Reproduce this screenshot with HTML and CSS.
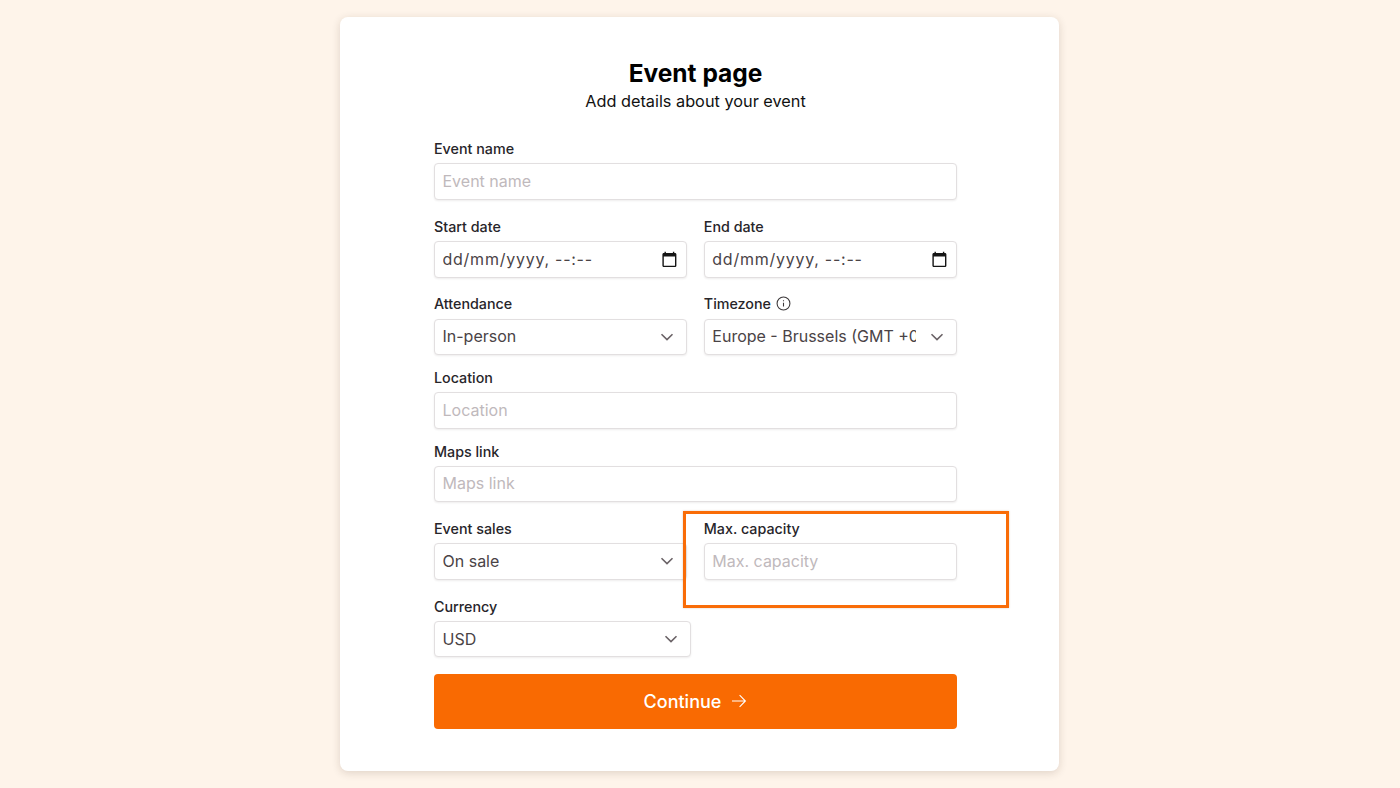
FILE: index.html
```html
<!DOCTYPE html>
<html lang="en">
<head>
<meta charset="utf-8">
<title>Event page</title>
<link rel="stylesheet" href="styles.css">
</head>
<body>
<main class="card">
  <header class="head">
    <h1>Event page</h1>
    <p>Add details about your event</p>
  </header>
  <form class="form">
    <div class="field">
      <label>Event name</label>
      <input class="control" placeholder="Event name">
    </div>
    <div class="row">
      <div class="field">
        <label>Start date</label>
        <div class="wrap">
          <input class="control date" value="dd/mm/yyyy, --:--">
          <svg class="cal" viewBox="0 0 24 24"><path d="M20 3h-1V1h-2v2H7V1H5v2H4c-1.1 0-2 .9-2 2v16c0 1.1.9 2 2 2h16c1.1 0 2-.9 2-2V5c0-1.1-.9-2-2-2zm0 18H4V8h16v13z"/></svg>
        </div>
      </div>
      <div class="field">
        <label>End date</label>
        <div class="wrap">
          <input class="control date" value="dd/mm/yyyy, --:--">
          <svg class="cal" viewBox="0 0 24 24"><path d="M20 3h-1V1h-2v2H7V1H5v2H4c-1.1 0-2 .9-2 2v16c0 1.1.9 2 2 2h16c1.1 0 2-.9 2-2V5c0-1.1-.9-2-2-2zm0 18H4V8h16v13z"/></svg>
        </div>
      </div>
    </div>
    <div class="row">
      <div class="field">
        <label>Attendance</label>
        <div class="wrap">
          <select class="control pick"><option>In-person</option></select>
          <svg class="chev" viewBox="0 0 14 8"><path d="M1.5 1.2 7 6.6l5.5-5.4"/></svg>
        </div>
      </div>
      <div class="field">
        <label class="with-info">Timezone
          <svg class="info" viewBox="0 0 14 14"><circle cx="7" cy="7" r="6"/><path d="M7 6.4v3.4M7 4v.9"/></svg>
        </label>
        <div class="wrap">
          <select class="control pick"><option>Europe - Brussels (GMT +01:00)</option></select>
          <svg class="chev" viewBox="0 0 14 8"><path d="M1.5 1.2 7 6.6l5.5-5.4"/></svg>
        </div>
      </div>
    </div>
    <div class="field tight">
      <label>Location</label>
      <input class="control" placeholder="Location">
    </div>
    <div class="field tight">
      <label>Maps link</label>
      <input class="control" placeholder="Maps link">
    </div>
    <div class="row">
      <div class="field">
        <label>Event sales</label>
        <div class="wrap">
          <select class="control pick"><option>On sale</option></select>
          <svg class="chev" viewBox="0 0 14 8"><path d="M1.5 1.2 7 6.6l5.5-5.4"/></svg>
        </div>
      </div>
      <div class="field highlighted">
        <label>Max. capacity</label>
        <input class="control" placeholder="Max. capacity">
        <span class="highlight"></span>
      </div>
    </div>
    <div class="field currency">
      <label>Currency</label>
      <div class="wrap">
        <select class="control pick"><option>USD</option></select>
        <svg class="chev" viewBox="0 0 14 8"><path d="M1.5 1.2 7 6.6l5.5-5.4"/></svg>
      </div>
    </div>
    <button class="submit" type="button">Continue
      <svg class="arrow" viewBox="0 0 16 14"><path d="M1 7h13.4M8.6 1.2 14.4 7l-5.8 5.8"/></svg>
    </button>
  </form>
</main>
</body>
</html>
```
FILE: styles.css
```css
* { box-sizing: border-box; }
html, body { margin: 0; height: 100%; }
body {
  background: #fef4ea;
  font-family: Inter, "Liberation Sans", sans-serif;
  color: #1c1a1b;
  padding-top: 17px;
  overflow: hidden;
}
.card {
  width: 719px;
  height: 754px;
  margin-left: 340px;
  padding: 40px 102px 0 94px;
  background: #fff;
  border-radius: 8px;
  box-shadow: 0 2px 8px rgba(60, 40, 20, 0.16);
}
.head { text-align: center; }
.head h1 {
  margin: 0;
  font-size: 24.5px;
  line-height: 32px;
  font-weight: 700;
  color: #000;
}
.head p {
  margin: 1px 0 0;
  font-size: 16.3px;
  line-height: 23.5px;
  color: #111;
}
.form {
  display: flex;
  flex-direction: column;
  gap: 17px;
  margin-top: 25.9px;
}
.row {
  display: grid;
  grid-template-columns: 1fr 1fr;
  column-gap: 16.6px;
}
.field { display: flex; flex-direction: column; }
.tight { margin-top: -4px; }
.field label {
  display: flex;
  align-items: center;
  gap: 5px;
  height: 18.8px;
  margin-bottom: 5.2px;
  font-size: 14.3px;
  font-weight: 500;
  color: #27252a;
}
.wrap { position: relative; display: block; }
.control {
  display: block;
  width: 100%;
  height: 36.6px;
  padding: 0 7.5px 1px;
  background: #fff;
  border: 1px solid #e2dfe0;
  border-radius: 4px;
  box-shadow: 0 1px 2px rgba(40, 30, 30, 0.08);
  font-family: inherit;
  font-size: 16px;
  color: #4a4346;
  outline: none;
}
.control::placeholder { color: #bfb9bc; opacity: 1; }
.date { letter-spacing: 0.75px; }
.pick {
  appearance: none;
  padding-right: 40px;
}
.cal {
  position: absolute;
  right: 9.6px;
  top: 9.6px;
  width: 16.8px;
  height: 16.8px;
  fill: #151515;
}
.chev {
  position: absolute;
  right: 13px;
  top: 14px;
  width: 14px;
  height: 8px;
  fill: none;
  stroke: #6a6266;
  stroke-width: 1.6;
}
.info {
  width: 15px;
  height: 15px;
  fill: none;
  stroke: #3c383a;
  stroke-width: 1;
}
.highlighted { position: relative; }
.highlight {
  position: absolute;
  left: -21px;
  top: -8.5px;
  width: 326px;
  height: 97px;
  border: 3px solid #f96c07;
  box-shadow: 0 0 2px rgba(120, 60, 10, 0.25);
  pointer-events: none;
}
.currency { width: 257px; }
.submit {
  display: flex;
  align-items: center;
  justify-content: center;
  gap: 10px;
  width: 100%;
  height: 55px;
  margin-top: -0.6px;
  border: 0;
  border-radius: 4px;
  background: #f96a02;
  color: #fff;
  font-family: inherit;
  font-size: 18px;
  font-weight: 500;
}
.arrow {
  width: 16px;
  height: 14px;
  fill: none;
  stroke: #fff;
  stroke-width: 1.1;
}
```
